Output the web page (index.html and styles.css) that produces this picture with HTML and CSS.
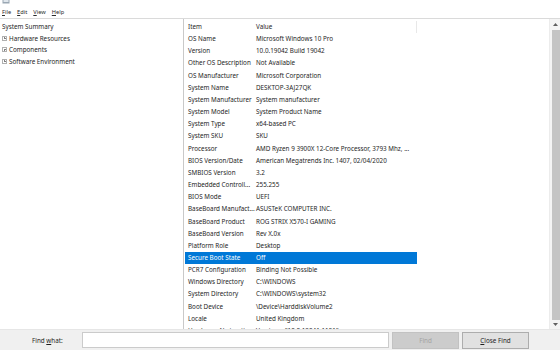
FILE: index.html
```html
<!DOCTYPE html>
<html>
<head>
<meta charset="utf-8">
<link rel="stylesheet" href="styles.css">
</head>
<body>
<div class="window">
  <div class="titlebar">
    <svg class="appicon" width="8" height="4" viewBox="0 0 8 4"><rect x="0.5" y="0" width="7" height="3.5" fill="#9aa7b3"/><rect x="1.5" y="0" width="5" height="2" fill="#dfe6ec"/></svg>
  </div>
  <div class="menubar">
    <span><u>F</u>ile</span>
    <span><u>E</u>dit</span>
    <span><u>V</u>iew</span>
    <span><u>H</u>elp</span>
  </div>
  <div class="main">
    <div class="tree">
      <div class="node">System Summary</div>
      <div class="node"><span class="exp"></span>Hardware Resources</div>
      <div class="node"><span class="exp"></span>Components</div>
      <div class="node"><span class="exp"></span>Software Environment</div>
    </div>
    <div class="list">
      <div class="table">
        <div class="row head"><span>Item</span><span class="hv">Value</span></div>
        <div class="row"><span>OS Name</span><span>Microsoft Windows 10 Pro</span></div>
        <div class="row"><span>Version</span><span>10.0.19042 Build 19042</span></div>
        <div class="row"><span>Other OS Description</span><span>Not Available</span></div>
        <div class="row"><span>OS Manufacturer</span><span>Microsoft Corporation</span></div>
        <div class="row"><span>System Name</span><span>DESKTOP-3AJ27QK</span></div>
        <div class="row"><span>System Manufacturer</span><span>System manufacturer</span></div>
        <div class="row"><span>System Model</span><span>System Product Name</span></div>
        <div class="row"><span>System Type</span><span>x64-based PC</span></div>
        <div class="row"><span>System SKU</span><span>SKU</span></div>
        <div class="row"><span>Processor</span><span>AMD Ryzen 9 3900X 12-Core Processor, 3793 Mhz, ...</span></div>
        <div class="row"><span>BIOS Version/Date</span><span>American Megatrends Inc. 1407, 02/04/2020</span></div>
        <div class="row"><span>SMBIOS Version</span><span>3.2</span></div>
        <div class="row"><span>Embedded Controll...</span><span>255.255</span></div>
        <div class="row"><span>BIOS Mode</span><span>UEFI</span></div>
        <div class="row"><span>BaseBoard Manufact...</span><span>ASUSTeK COMPUTER INC.</span></div>
        <div class="row"><span>BaseBoard Product</span><span>ROG STRIX X570-I GAMING</span></div>
        <div class="row"><span>BaseBoard Version</span><span>Rev X.0x</span></div>
        <div class="row"><span>Platform Role</span><span>Desktop</span></div>
        <div class="row sel"><span>Secure Boot State</span><span>Off</span></div>
        <div class="row"><span>PCR7 Configuration</span><span>Binding Not Possible</span></div>
        <div class="row"><span>Windows Directory</span><span>C:\WINDOWS</span></div>
        <div class="row"><span>System Directory</span><span>C:\WINDOWS\system32</span></div>
        <div class="row"><span>Boot Device</span><span>\Device\HarddiskVolume2</span></div>
        <div class="row"><span>Locale</span><span>United Kingdom</span></div>
        <div class="row"><span>Hardware Abstractio...</span><span>Version = "10.0.19041.1151"</span></div>
      </div>
      <div class="scrollbar">
        <div class="arrow"><svg width="5" height="3" viewBox="0 0 5 3"><path d="M0 3 L2.5 0 L5 3 Z" fill="#606060"/></svg></div>
        <div class="thumb"></div>
        <div class="arrow down"><svg width="5" height="3" viewBox="0 0 5 3"><path d="M0 0 L2.5 3 L5 0 Z" fill="#606060"/></svg></div>
      </div>
    </div>
  </div>
  <div class="findbar">
    <span class="label">Find <u>w</u>hat:</span>
    <div class="input"></div>
    <div class="btn find">Find</div>
    <div class="btn close"><span><u>C</u>lose Find</span></div>
  </div>
</div>
</body>
</html>
```

FILE: styles.css
```css
* { box-sizing: border-box; }
html, body { margin: 0; padding: 0; }
body {
  width: 560px;
  height: 350px;
  overflow: hidden;
  background: #ffffff;
  font-family: "Noto Sans", "Open Sans", sans-serif;
  font-size: 6.3px;
  color: #1e1e1e;
}
.window { display: flex; flex-direction: column; height: 350px; }

.titlebar { height: 5px; padding-left: 2px; overflow: hidden; }
.appicon { display: block; }

.menubar {
  height: 13px;
  display: flex;
  align-items: center;
  gap: 6px;
  padding-left: 2px;
  font-size: 5.7px;
  color: #2a2a2a;
}
.menubar u, .findbar u { text-decoration: underline; text-underline-offset: 1px; }

.main {
  height: 311px;
  display: flex;
  border-top: 1px solid #dadada;
}

.tree {
  width: 184px;
  border-right: 1px solid #c9c9c9;
  padding-top: 2px;
}
.node {
  height: 11.5px;
  display: flex;
  align-items: center;
  padding-left: 2px;
  white-space: nowrap;
}
.exp {
  position: relative;
  width: 5px;
  height: 5px;
  border: 1px solid #b0b0b0;
  margin-right: 2px;
  flex: none;
}
.exp::before, .exp::after {
  content: "";
  position: absolute;
  background: #808080;
}
.exp::before { left: 0.5px; top: 1px; width: 2px; height: 1px; }
.exp::after { left: 1px; top: 0.5px; width: 1px; height: 2px; }

.list {
  flex: 1;
  display: flex;
  margin-left: 1px;
}
.table {
  flex: 1;
  overflow: hidden;
  padding-top: 2px;
}
.row {
  display: grid;
  grid-template-columns: 68px 164px;
  width: 232px;
  height: 12.16px;
  line-height: 12.16px;
  white-space: nowrap;
}
.row span { padding-left: 3px; overflow: hidden; }
.row span:first-child { overflow: visible; }
.row.head .hv { border-right: 1px solid #e8e8e8; }
.row.sel { background: #0078d7; color: #ffffff; }

.scrollbar {
  width: 11px;
  display: flex;
  flex-direction: column;
  border-left: 1px solid #ececec;
  background: #f4f4f4;
}
.arrow {
  height: 11px;
  display: flex;
  align-items: center;
  justify-content: center;
  padding-left: 1px;
}
.arrow.down { height: 9px; }
.arrow svg { display: block; }
.thumb {
  flex: 1;
  margin: 0 0 0 2px;
  background: #c4c4c4;
}

.findbar {
  height: 21px;
  display: flex;
  align-items: center;
  padding-left: 32px;
  background: #f0f0f0;
  border-top: 1px solid #e6e6e6;
}
.label { width: 50px; color: #1e1e1e; }
.input {
  width: 307px;
  height: 16px;
  background: #ffffff;
  border: 1px solid #cbcbcb;
}
.btn {
  height: 17px;
  width: 67px;
  display: flex;
  align-items: center;
  justify-content: center;
}
.btn.find {
  margin-left: 3px;
  background: #cccccc;
  border: 1px solid #c2c2c2;
  color: #a3a3a3;
}
.btn.close {
  margin-left: 3px;
  background: #e1e1e1;
  border: 1px solid #adadad;
  color: #1e1e1e;
}
```
